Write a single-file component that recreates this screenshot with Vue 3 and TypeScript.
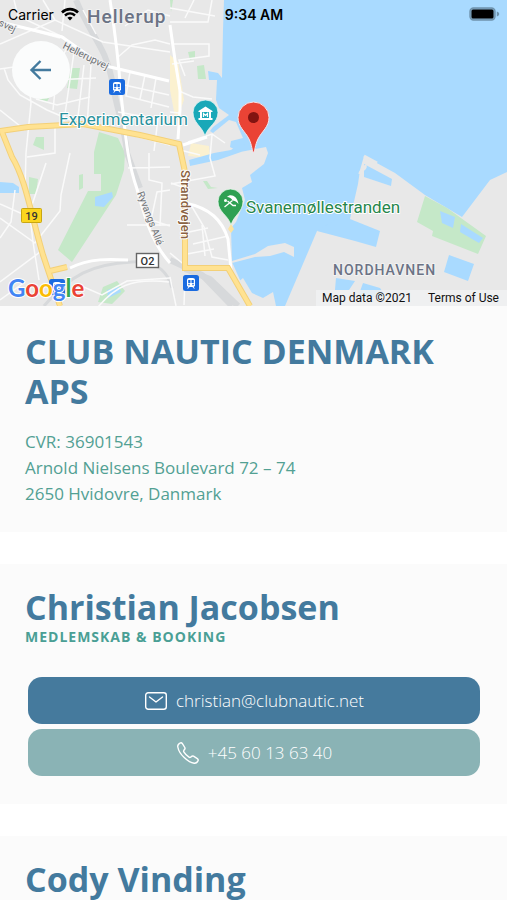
<script setup lang="ts">
interface Contact {
  name: string
  role: string
  email?: string
  phone?: string
}

const company = {
  name: 'CLUB NAUTIC DENMARK APS',
  lines: ['CVR: 36901543', 'Arnold Nielsens Boulevard 72 – 74', '2650 Hvidovre, Danmark'],
}

const contacts: Contact[] = [
  {
    name: 'Christian Jacobsen',
    role: 'MEDLEMSKAB & BOOKING',
    email: 'christian@clubnautic.net',
    phone: '+45 60 13 63 40',
  },
  { name: 'Cody Vinding', role: '' },
]

const goBack = () => window.history.back()
const telHref = (phone: string) => 'tel:' + phone.replace(/\s/g, '')
</script>

<template>
  <div class="screen">
    <header class="map">
      <svg class="map-canvas" viewBox="0 0 507 306" preserveAspectRatio="xMidYMid slice" role="img" aria-label="Map">
        <rect width="507" height="306" fill="#e8e8e8" />
        <!-- built-up blocks -->
        <path d="M170 55L178 62L184 100L176 122L170 90Z M191 143L209 146L210 158L188 156Z" fill="#fbf1d0" />
        <!-- sea -->
        <path
          class="water"
          d="M224 0L223 30L222 78L218 73L208 71L209 80L217 80L216 100L219 108L229 115L213 127L210 131L213 133L229 120L236 122L243 138L231 141L230 147L240 152L266 147L268 153L264 164L250 175L252 182L242 188L245 200L236 222L231 228L232 262L240 280L252 306H285L317 231L350 219L358 184L360 170L364 156L395 173L425 195L462 217L490 180L507 172V0Z"
        />
        <path class="land" d="M232 261L255 254L268 246L285 243L294 247L294 257L284 252L270 256L255 257L232 263Z M237 283L243 278L252 293L263 298L273 292L276 306H249Z" />
        <path class="water" d="M336 219L350 219L380 231L376 247L355 241L317 231Z M364 164L392 179L391 186L364 177Z M449 255L474 264L468 281L444 272Z M336 278L355 281L349 290H335Z M363 283L380 288L386 297H358Z" />
        <path class="water" d="M189 160L214 153L231 150L239 144L245 145L241 152L218 160L190 166Z" />
        <path d="M360 174C360 169 367 170 365 165M364 156L377 163" stroke="#e8e8e8" stroke-width="3" fill="none" />
        <!-- parks -->
        <path class="park" d="M99 132L118 138L125 153L124 170L116 195L72 262L58 250L88 191L101 191V174H94V152Z" />
        <path class="park" d="M71 68L80 68L77 89L67 88Z M36 137H44V150L33 145Z M29 177L38 179L36 194H29Z M79 175L83 174V188L79 190Z M40 97L49 98L47 102L39 100Z M188 52L195 51V58L190 60Z M197 66L204 65L206 79L198 79Z M203 181L207 181L211 187L218 188L208 189Z" />
        <path class="park" d="M170 0H173L171 12ZM103 287L117 281L125 291L112 304L98 302Z" />
        <path class="park" d="M425 196L447 208L486 236L478 254L432 236L433 231L417 222Z" />
        <path class="water" d="M440 211L455 217L453 228L442 223Z M461 224L483 238L479 243L460 232Z M95 197L112 192L113 197L104 207L95 206Z M0 182L13 183L19 187L19 193H0Z M107 290L119 287L121 292L108 298Z" />
        <!-- railway corridor -->
        <g class="rail">
          <path d="M76 0C90 35 106 47 112 80C116 108 125 128 127 153L140 188" />
          <path d="M44 306C70 275 92 264 132 262C160 260 169 276 172 288" stroke-width="3" />
          <path d="M170 260L202 275L232 306" stroke-width="9" />
          <path d="M185 269L210 279L238 306" stroke-width="5" />
        </g>
        <!-- side streets -->
        <g class="minor">
          <path d="M0 69L27 65L31 103L26 153L25 190M0 44L55 20L103 42L170 52M4 68L8 80L20 95L47 110L75 122M55 20L43 0M14 0L18 16L65 38M60 38L0 22M65 0L62 31M83 10L96 34M52 80L96 78M36 99L57 105L90 97M57 70L53 110M68 45L57 69M74 52L64 121M84 65L77 125M91 65L87 127M0 110L25 130M55 127V153L27 157" />
          <path d="M118 57L132 45L155 40L170 44M130 72L126 96L169 107M145 75L140 99M156 78L151 108M125 26L148 10L170 16M120 84L169 95M118 112L158 119L154 151M112 130L170 145" />
          <path d="M170 22L208 22L212 0M185 18L194 0M170 8L215 16M173 44H209V56L179 60L185 76M172 64L194 61M179 91L193 97L212 99M170 112L179 113M188 142L212 134L225 143M212 135L210 158L215 176L171 184M180 150L200 155" />
          <path d="M0 218L35 243L60 211L61 195L70 153M15 190L11 222L0 238M27 190L33 242L39 280M0 282L40 252M46 163L32 205M0 204L36 220M56 307L79 285L102 295L127 281L170 278M0 300L25 282" />
          <path d="M128 168L170 167M149 153V180L162 183L160 226M170 190L157 192L151 220L170 226M127 225H170M191 205L204 227L212 257L228 260M193 244L228 236M189 232L208 228M187 254L214 249M171 183L190 190M202 225L205 256M185 279L184 305M170 277L176 306M170 253L187 267" />
          <path d="M98 307C115 287 130 278 169 282" />
        </g>
        <g class="street">
          <path d="M0 22L62 37L102 65L169 81M110 0C116 38 119 66 121 95C125 126 126 158 137 189C146 222 153 244 170 263M170 25L175 60L180 91V110L178 139M183 145L207 137M185 203C210 208 222 220 228 239L231 270M70 268C90 258 110 259 128 260" />
        </g>
        <g class="road-edge">
          <path d="M0 131L28 127L83 124L140 135L179 144L185 172L185 268H228L250 306M2 132L12 157C26 180 31 215 43 255L60 306M50 271L67 267" />
        </g>
        <g class="road">
          <path d="M0 131L28 127L83 124L140 135L179 144L185 172L185 268H228L250 306M2 132L12 157C26 180 31 215 43 255L60 306M50 271L67 267" />
        </g>
        <path d="M228 229L231 224L234 229L231 233Z" fill="#fbe3a0" />

        <!-- street names -->
        <g class="street-name">
          <text transform="translate(62 48) rotate(26)">Hellerupvej</text>
          <text transform="translate(-2 25) rotate(26)">svej</text>
          <text transform="translate(137 193) rotate(69)">Ryvangs Allé</text>
        </g>
        <text class="main-street" transform="translate(181 170) rotate(90)">Strandvejen</text>
        <text class="district" x="87" y="23" font-size="19">Hellerup</text>
        <text class="district" x="333" y="275" font-size="14">NORDHAVNEN</text>
        <text class="museum" x="59" y="125">Experimentarium</text>
        <text class="beach" x="246" y="213">Svanemøllestranden</text>

        <!-- road shields -->
        <rect x="21.500" y="208.500" width="20" height="14" rx="1" fill="#fbd51e" stroke="#c8a614" />
        <text class="shield" x="31.500" y="220">19</text>
        <rect x="136.500" y="253.500" width="22" height="14" fill="#fff" stroke="#666" stroke-width="1.400" />
        <text class="shield" x="147.500" y="265">O2</text>

        <!-- train stations -->
        <g v-for="[x, y] in [[109, 79], [183, 275], [49, 279]]" :key="x" :transform="`translate(${x} ${y})`">
          <rect width="16" height="16" rx="2.500" fill="#1a6be0" />
          <path d="M4 5C4 3 6 3 8 3S12 3 12 5V11L10.500 12L12 13.500H10.800L9.500 12H6.500L5.200 13.500H4L5.500 12L4 11Z" fill="#fff" />
          <path d="M5.200 5H7.500V8H5.200ZM8.500 5H10.800V8H8.500Z" fill="#1a6be0" />
          <path d="M5.300 9.500H6.700M9.300 9.500H10.700" stroke="#1a6be0" stroke-width="1.300" />
        </g>

        <!-- museum pin -->
        <path d="M205 136C202 126 193 123 193 112.500A12.500 12.500 0 0 1 218 112.500C218 123 208 126 205 136Z" fill="#18a8b8" stroke="#e8f7f8" stroke-width=".8" />
        <path d="M198.500 111L205.500 106.500L212.500 111V112H198.500ZM200 112H202V118H200ZM209 112H211V118H209ZM198.500 118H212.500V120H198.500Z" fill="#fff" />
        <path d="M203.500 117V113.500L205.500 115.500L207.500 113.500V117" fill="none" stroke="#fff" stroke-width="1.200" />
        <!-- beach pin: parasol over a sunbather -->
        <path d="M231 225C228 215 218 212 218 201.500A12.500 12.500 0 0 1 243 201.500C243 212 234 215 231 225Z" fill="#2fa052" stroke="#e8f7ec" stroke-width=".8" />
        <path d="M227 197C230 193.500 237 195 238.500 204C236 201 234.500 200.500 232.500 200.500C231.500 198.500 229.500 197 227 197Z" fill="#fff" />
        <circle cx="225.500" cy="200.500" r="1.500" fill="#fff" />
        <path d="M232.500 200.500L224.500 207M227.500 201L233 205.500H236" fill="none" stroke="#fff" stroke-width="1.300" />
        <!-- selected place -->
        <path d="M253.500 153C252 151 252 145 249 139C245 131 238 127 238 117.500A15.500 15.500 0 0 1 269 117.500C269 127 262 131 258 139C255 145 255 151 253.500 153Z" fill="#ea4335" stroke="#f4e5ec" />
        <circle cx="253.500" cy="117.500" r="5.500" fill="#811411" />

        <text class="google" x="8" y="297"><tspan fill="#4285f4">G</tspan><tspan fill="#ea4335">o</tspan><tspan fill="#fbbc05">o</tspan><tspan fill="#4285f4">g</tspan><tspan fill="#34a853">l</tspan><tspan fill="#ea4335">e</tspan></text>
      </svg>

      <div class="status">
        <div class="carrier">
          <span>Carrier</span>
          <svg width="18" height="14" viewBox="0 0 18 14" aria-hidden="true">
            <path d="M1 5.500C5.500 1 12.500 1 17 5.500" fill="none" stroke="#000" stroke-width="2.600" />
            <path d="M4 8.500C7 5.700 11 5.700 14 8.500" fill="none" stroke="#000" stroke-width="2.400" />
            <path d="M6.400 10.800C8 9.400 10 9.400 11.600 10.800L9 13.500Z" />
          </svg>
        </div>
        <strong class="clock">9:34 AM</strong>
        <svg class="battery" width="31" height="14" viewBox="0 0 31 14" aria-hidden="true">
          <rect x="1" y="1" width="25" height="12" rx="3.500" fill="#83abc8" stroke="#6f93ad" stroke-width="1.400" />
          <rect x="2.500" y="2.500" width="22" height="9" rx="1.500" />
          <path d="M27.800 4.500C31 5.500 31 8.500 27.800 9.500Z" fill="#6f93ad" />
        </svg>
      </div>

      <button class="back" type="button" aria-label="Back" @click="goBack">
        <svg width="24" height="24" viewBox="0 0 24 24" aria-hidden="true">
          <path d="M22 12H3M11.500 3L2.500 12L11.500 21" fill="none" stroke="#437a9e" stroke-width="2.400" />
        </svg>
      </button>

      <div class="attribution">
        <span>Map data ©2021</span>
        <a href="#terms">Terms of Use</a>
      </div>
    </header>

    <main class="content">
      <section class="card company">
        <h1>{{ company.name }}</h1>
        <address>
          <span v-for="line in company.lines" :key="line">{{ line }}</span>
        </address>
      </section>

      <section v-for="c in contacts" :key="c.name" class="card person">
        <h2>{{ c.name }}</h2>
        <p v-if="c.role" class="role">{{ c.role }}</p>
        <div v-if="c.email || c.phone" class="actions">
          <a v-if="c.email" class="action email" :href="'mailto:' + c.email">
            <svg width="24" height="24" viewBox="0 0 24 24" aria-hidden="true">
              <rect x="1.700" y="3.700" width="20.600" height="16.600" rx="2.500" />
              <path d="M5.500 8L12 13L18.500 8" />
            </svg>
            <span>{{ c.email }}</span>
          </a>
          <a v-if="c.phone" class="action phone" :href="telHref(c.phone)">
            <svg width="24" height="24" viewBox="0 0 24 24" aria-hidden="true">
              <path
                d="M4.500 1.800C3 2.400 1.500 4.200 1.800 6C2.400 9.500 5.500 14 8.200 16.500C11 19.200 15 21.900 18.200 22.200C20 22.400 21.700 20.800 22.200 19.300C22.400 18.600 22 18.100 21.300 17.600L17.500 15.200C16.700 14.700 16.200 14.900 15.600 15.400L14.600 16.200C14 16.700 13.600 16.600 13 16.200C10.800 14.800 9 12.800 7.800 10.900C7.400 10.300 7.500 9.900 7.900 9.300L8.700 8.300C9.100 7.700 9.200 7.200 8.800 6.500L6.400 2.700C5.900 1.900 5.300 1.500 4.500 1.800Z"
              />
            </svg>
            <span>{{ c.phone }}</span>
          </a>
        </div>
      </section>
    </main>
  </div>
</template>

<style>
body {
  background: #fff;
  overflow-x: hidden;
}
</style>

<style scoped>
.screen {
  height: 100vh;
  overflow: hidden;
  font-family: 'Open Sans', sans-serif;
}

.map {
  position: relative;
  height: 306px;
  overflow: hidden;
}

.map-canvas {
  display: block;
  width: 100%;
  height: 100%;
  font-family: Roboto, sans-serif;
}

.water {
  fill: #a9daff;
}

.land {
  fill: #e8e8e8;
}

.park {
  fill: #c5e8c8;
}

.rail path {
  fill: none;
  stroke: #d7d9db;
  stroke-width: 6;
}

.rail path[stroke-width='3'] {
  stroke-width: 3;
}

.minor path {
  fill: none;
  stroke: #fafafa;
  stroke-width: 1.5;
}

.street path {
  fill: none;
  stroke: #fff;
  stroke-width: 3;
}

.road-edge path {
  fill: none;
  stroke: #f3d078;
  stroke-width: 6;
}

.road path {
  fill: none;
  stroke: #ffe291;
  stroke-width: 4;
}

.map-canvas text {
  paint-order: stroke;
  stroke: #fff;
  stroke-width: 2;
  stroke-linejoin: round;
}

.map-canvas .street-name text {
  font-size: 10px;
  fill: #6c6f73;
  stroke: #f2f2f2;
}

.map-canvas .main-street {
  font-size: 13px;
  font-weight: 500;
  fill: #8a6242;
}

.map-canvas .district {
  font-weight: 500;
  letter-spacing: 1px;
  fill: #6b7385;
  stroke: #f2f2f2;
}

.map-canvas .museum {
  font-size: 17px;
  fill: #2a929d;
}

.map-canvas .beach {
  font-size: 17px;
  fill: #26864b;
}

.map-canvas .shield {
  font-size: 11px;
  font-weight: 500;
  fill: #333;
  stroke: none;
  text-anchor: middle;
}

.map-canvas .google {
  font-family: Lato, sans-serif;
  font-size: 24px;
  font-weight: 700;
}

.status {
  position: absolute;
  inset: 0 0 auto;
  display: grid;
  grid-template-columns: 1fr auto 1fr;
  align-items: center;
  height: 28px;
  padding: 0 7px 0 8px;
  font-family: Inter, sans-serif;
  font-size: 14px;
  color: #000;
}

.carrier {
  display: flex;
  align-items: center;
  gap: 7px;
}

.clock {
  font-weight: 600;
}

.battery {
  justify-self: end;
}

.back {
  position: absolute;
  top: 41px;
  left: 12px;
  display: grid;
  place-items: center;
  width: 58px;
  height: 58px;
  padding: 0;
  border: 0;
  border-radius: 50%;
  background: #fbfcfc;
  cursor: pointer;
}

.attribution {
  position: absolute;
  right: 0;
  bottom: 0;
  display: flex;
  gap: 16px;
  padding: 0 8px 0 6px;
  background: rgb(240 241 242 / 85%);
  font-family: Roboto, sans-serif;
  font-size: 12px;
  line-height: 16px;
  color: #111;
}

.attribution a {
  color: inherit;
  text-decoration: none;
}

.content {
  display: flex;
  flex-direction: column;
  gap: 32px;
}

.card {
  padding: 25px;
  background: #fbfbfb;
}

h1,
h2 {
  margin: 0;
  font-size: 34px;
  font-weight: 700;
  line-height: 40px;
  color: #437a9e;
}

address {
  display: flex;
  flex-direction: column;
  margin-top: 18px;
  font-size: 17px;
  font-style: normal;
  line-height: 26px;
  color: #52a093;
}

.person {
  padding-top: 23px;
}

.role {
  margin: 0;
  font-size: 14px;
  font-weight: 700;
  line-height: 20px;
  letter-spacing: 1px;
  color: #4a9f95;
}

.actions {
  display: flex;
  flex-direction: column;
  gap: 5px;
  margin: 30px 2px 3px 3px;
}

.action {
  display: flex;
  align-items: center;
  justify-content: center;
  gap: 8px;
  height: 47px;
  border-radius: 14px;
  font-size: 17px;
  font-weight: 300;
  color: #fff;
  text-decoration: none;
}

.action svg {
  fill: none;
  stroke: #fff;
  stroke-width: 1.4;
  stroke-linecap: round;
  stroke-linejoin: round;
}

.email {
  background: #457a9d;
}

.phone {
  background: #8ab3b5;
}
</style>
